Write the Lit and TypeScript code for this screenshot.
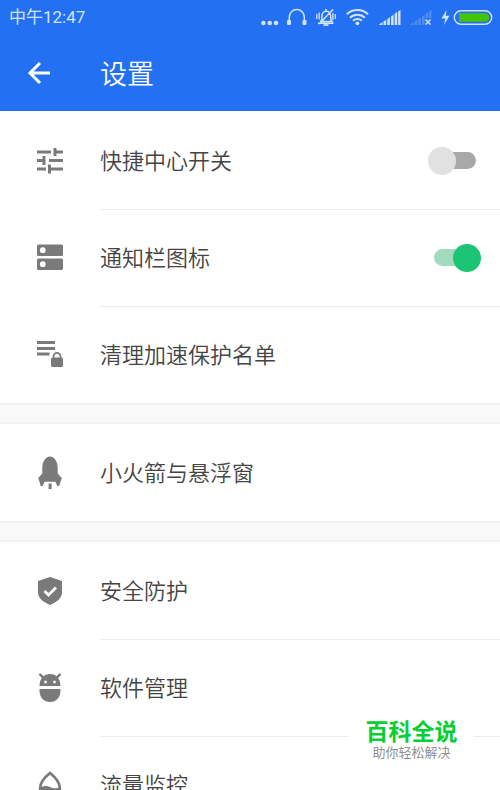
import { LitElement, html, css, svg, nothing, SVGTemplateResult } from "lit";
import { customElement } from "lit/decorators.js";

interface Item {
  id: string;
  label: string;
  icon: SVGTemplateResult;
  toggle?: boolean;
}

const sliders = svg`
  <path stroke="currentColor" stroke-width="3" fill="none"
    d="M2 6h14M19 6h9M2 14.500h8M14 14.500h14M2 23h9M14 23h14M20 2v8M9 10v9M14.500 18.500v9"/>`;

const drawers = svg`
  <path fill="currentColor" fill-rule="evenodd"
    d="M3.500 1.500h23q1.500 0 1.500 1.500v8.500q0 1.500-1.500 1.500h-23q-1.500 0-1.500-1.500v-8.500q0-1.500 1.500-1.500zM7.800 4.300a2.900 2.900 0 1 0 0 5.800 2.900 2.900 0 0 0 0-5.800z
       M3.500 15.500h23q1.500 0 1.500 1.500v8.500q0 1.500-1.500 1.500h-23q-1.500 0-1.500-1.500v-8.500q0-1.500 1.500-1.500zM7.800 18.300a2.900 2.900 0 1 0 0 5.800 2.900 2.900 0 0 0 0-5.800z"/>`;

const lockedList = svg`
  <path stroke="currentColor" stroke-width="2.800" fill="none" d="M2 2.500h18M2 8.500h18M2 14h12.500"/>
  <rect x="16" y="17.500" width="12" height="9.500" rx="1.500" fill="currentColor"/>
  <path stroke="currentColor" stroke-width="1.700" fill="none" d="M18.600 18.500v-2.200a3.400 3.400 0 0 1 6.800 0v2.200"/>`;

const rocket = svg`
  <path fill="currentColor"
    d="M15-1.500C10.500-1.500 7.300 4 7.300 9.500V15.500L3.200 20 5.800 28H7.600L9.600 23.800H20.400L22.400 28H24.200L26.800 20 22.700 15.500V9.500C22.700 4 19.500-1.500 15-1.500z"/>
  <path fill="currentColor" d="M13.600 25.500h3v5.500h-3z"/>`;

const shield = svg`
  <path fill="currentColor" d="M15 1l12 4v11.500c0 5.500-5 9.500-12 12.500-7-3-12-7-12-12.500V5z"/>
  <path stroke="#fff" stroke-width="2.800" fill="none" d="M9.500 15l4 4 7.500-7.500"/>`;

const robot = svg`
  <path stroke="currentColor" stroke-width="2.400" stroke-linecap="round" fill="none" d="M5.200 1.700l3 3M24.800 1.700l-3 3"/>
  <path fill="currentColor" fill-rule="evenodd"
    d="M4.500 13C4.500 5.500 9 1 15 1s10.500 4.500 10.500 12zM9.300 7.700v2.600h2.400V7.700zM18.300 7.700v2.600h2.400V7.700z"/>
  <path fill="currentColor" d="M4.500 16h21v1.500c0 7-4.500 11.500-10.500 11.500S4.500 24.500 4.500 17.500z"/>`;

const drop = svg`
  <path stroke="currentColor" stroke-width="2.800" fill="none"
    d="M15 3C10 7 5.200 12 5.200 18a9.800 9.800 0 0 0 19.600 0C24.800 12 20 7 15 3z"/>
  <path fill="currentColor" d="M5 17.500c4-2 7-2 10-.500s6 1.500 10 .500c0 6-4 10-10 10S5 23.500 5 17.500z"/>`;

const groups: Item[][] = [
  [
    { id: "quick", label: "快捷中心开关", icon: sliders, toggle: false },
    { id: "notify", label: "通知栏图标", icon: drawers, toggle: true },
    { id: "protect", label: "清理加速保护名单", icon: lockedList },
  ],
  [{ id: "rocket", label: "小火箭与悬浮窗", icon: rocket }],
  [
    { id: "security", label: "安全防护", icon: shield },
    { id: "apps", label: "软件管理", icon: robot },
    { id: "traffic", label: "流量监控", icon: drop },
  ],
];

@customElement("settings-row")
export class SettingsRow extends LitElement {
  static properties = { item: { attribute: false }, divided: { type: Boolean } };
  declare item: Item;
  declare divided: boolean;

  static styles = css`
    :host { display: block; }
    .row {
      display: flex;
      align-items: stretch;
      height: 97px;
      color: #444;
      text-decoration: none;
      cursor: pointer;
    }
    .icon {
      flex: none;
      display: flex;
      align-items: center;
      justify-content: center;
      width: 100px;
      color: #7a7a7a;
    }
    .icon svg { width: 30px; height: 30px; overflow: visible; }
    .body {
      flex: 1;
      display: flex;
      align-items: center;
      justify-content: space-between;
      padding-right: 19px;
      border-top: 1px solid transparent;
    }
    .divided { border-top-color: #ececec; }
    .label { padding-bottom: 4px; font-size: 22px; line-height: 32px; font-weight: 350; }
    .switch {
      appearance: none;
      position: relative;
      flex: none;
      width: 53px;
      height: 28px;
      margin: 0;
      cursor: pointer;
    }
    .switch::before,
    .switch::after { content: ""; position: absolute; }
    .switch::before {
      inset: 5px 5px 6px 6px;
      border-radius: 9px;
      background: #a8a8a8;
    }
    .switch::after {
      top: 0;
      left: 0;
      width: 28px;
      height: 28px;
      border-radius: 50%;
      background: #e1e1e1;
    }
    .switch:checked::before { background: #a1dabd; }
    .switch:checked::after { left: auto; right: 0; background: #1bc573; }
  `;

  render() {
    const { id, label, icon, toggle } = this.item;
    const isSwitch = toggle !== undefined;
    const content = html`
      <span class="icon"><svg viewBox="0 0 30 30" aria-hidden="true">${icon}</svg></span>
      <span class="body ${this.divided ? "divided" : ""}">
        <span class="label">${label}</span>
        ${isSwitch
          ? html`<input class="switch" type="checkbox" role="switch" id=${id} .checked=${toggle} />`
          : nothing}
      </span>`;
    return isSwitch
      ? html`<label class="row" for=${id}>${content}</label>`
      : html`<a class="row" href="#${id}">${content}</a>`;
  }
}

@customElement("status-bar")
export class StatusBar extends LitElement {
  static styles = css`
    :host {
      display: flex;
      align-items: center;
      justify-content: space-between;
      height: 34px;
      padding: 0 7px 0 9px;
      color: #d3e2fc;
      font-size: 17px;
      line-height: 24px;
    }
    .time { font-family: Roboto, "Noto Sans CJK SC", sans-serif; }
    .tray { width: 233px; height: 34px; }
  `;

  render() {
    return html`
      <span class="time">中午12:47</span>
      <svg class="tray" viewBox="260 0 233 34" fill="none" stroke="currentColor" aria-hidden="true">
        <g fill="currentColor" stroke="none">
          <circle cx="263.300" cy="23" r="2.300"/><circle cx="269.700" cy="23" r="2.300"/><circle cx="276" cy="23" r="2.300"/>
          <rect x="287" y="20" width="4" height="5" rx="1"/><rect x="302.500" y="20" width="4" height="5" rx="1"/>
        </g>
        <path stroke-width="1.500" d="M289.300 21v-4a7.500 7.500 0 0 1 15 0v4"/>
        <path stroke-width="1.500" d="M321 21.500c1-1.500 1-4 1-6a4.300 4.300 0 0 1 8.600 0c0 2 0 4.500 1.400 6zM318 23.300h15.500M319 24L333 9.500M326 9v2"/>
        <path stroke-width="1.800" d="M323.500 25h5"/>
        <path stroke-width="1.300" d="M316.800 14v5M319.200 12.500v7M332.900 13v7M335.300 14v5"/>
        <path stroke-width="2" d="M346.800 14.300a15.500 15.500 0 0 1 21.200 0M350 17.700a10.800 10.800 0 0 1 14.800 0M353 20.800a6.400 6.400 0 0 1 8.800 0"/>
        <circle cx="357.400" cy="23.300" r="1.900" fill="currentColor" stroke="none"/>
        <g fill="currentColor" stroke="none">
          <path d="M378.500 25l4-3V25zM383.500 21.500l2.700-1.700V25h-2.700zM387.300 19l2.600-1.700V25h-2.600zM391 16.500l2.600-1.700V25H391zM394.600 13.800l2.600-1.700V25h-2.600zM398.100 11.500l2.400-1.500v15h-2.400z"/>
          <path opacity=".25" d="M409.500 25l4-3V25zM414.500 21.500l2.700-1.700V25h-2.700zM418.300 19l2.600-1.700V25h-2.600zM422 16.500l2.600-1.700V25H422zM425.600 13.800l2.600-1.700V18h-2.600zM429.100 11.500l2.400-1.500v8h-2.400z"/>
          <path d="M446.500 10l-5 8.500h3.800L444 25l5.500-9.300h-3.700z"/>
        </g>
        <path stroke-width="1.500" d="M425.500 19.500l5 5M430.500 19.500l-5 5"/>
        <rect x="454.300" y="10.700" width="37.400" height="13.600" rx="6.800" stroke-width="1.400"/>
        <path fill="#45c404" stroke="none" d="M459 13.300h26a4.200 4.200 0 0 1 0 8.400H459z"/>
      </svg>`;
  }
}

@customElement("app-root")
export class AppRoot extends LitElement {
  static styles = css`
    :host {
      display: flex;
      flex-direction: column;
      position: relative;
      height: 100vh;
      overflow: hidden;
      background: #fff;
      font-family: "Noto Sans CJK SC", sans-serif;
    }
    .top { flex: none; background: #2371f2; }
    .bar { display: flex; align-items: center; height: 77px; color: #fff; }
    .back {
      display: flex;
      justify-content: center;
      width: 78px;
      margin-right: 22px;
      padding: 0;
      border: 0;
      background: none;
      color: inherit;
      cursor: pointer;
    }
    .back svg { width: 24px; height: 24px; }
    .title { margin: 0; font-size: 27px; line-height: 40px; font-weight: 350; }
    .list {
      flex: 1;
      min-height: 0;
      padding-top: 1px;
      overflow-y: auto;
      scrollbar-width: none;
    }
    .gap {
      box-sizing: border-box;
      height: 21px;
      border: solid #f2f2f2;
      border-width: 2px 0;
      background: #f9f9f9;
    }
    .mark {
      position: absolute;
      right: 26px;
      bottom: 22px;
      display: flex;
      flex-direction: column;
      align-items: center;
      width: 125px;
      padding: 8px 0;
      box-sizing: border-box;
      background: #fff;
    }
    .brand { font-size: 23px; line-height: 28px; font-weight: 700; color: #06cf32; }
    .slogan { font-size: 13px; line-height: 16px; color: #8f8f8f; }
  `;

  render() {
    return html`
      <header class="top">
        <status-bar></status-bar>
        <div class="bar">
          <button class="back" type="button" aria-label="返回">
            <svg viewBox="0 0 24 24" fill="none" stroke="currentColor" stroke-width="3" aria-hidden="true">
              <path d="M23 12H3M13 2L3 12l10 10"/>
            </svg>
          </button>
          <h1 class="title">设置</h1>
        </div>
      </header>
      <main class="list">
        ${groups.map(
          (items, g) => html`
            ${g > 0 ? html`<div class="gap"></div>` : nothing}
            <section>
              ${items.map((item, i) => html`<settings-row .item=${item} ?divided=${i > 0}></settings-row>`)}
            </section>`
        )}
      </main>
      <aside class="mark">
        <span class="brand">百科全说</span>
        <span class="slogan">助你轻松解决</span>
      </aside>`;
  }
}
